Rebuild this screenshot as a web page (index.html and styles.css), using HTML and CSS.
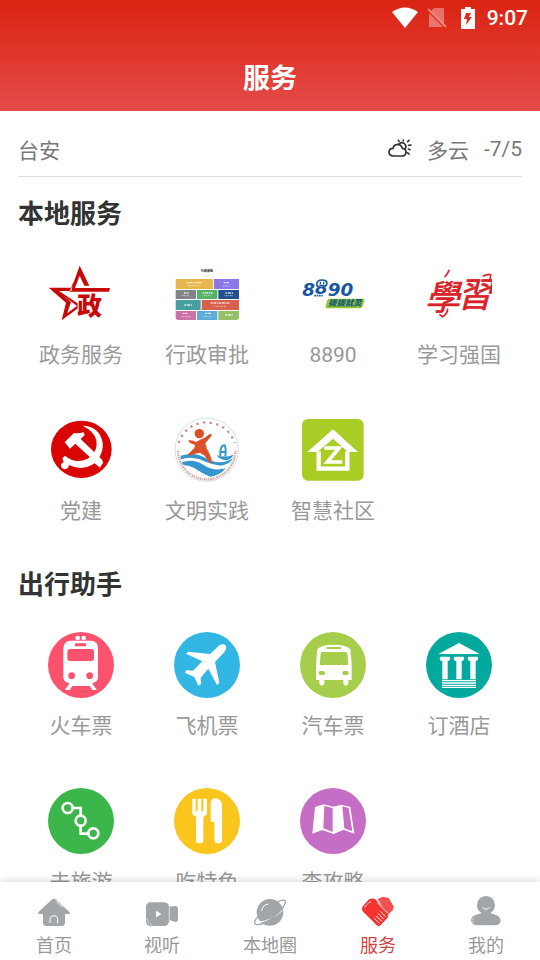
FILE: index.html
```html
<!DOCTYPE html>
<html lang="zh-CN">

<head>
    <meta charset="UTF-8">
    <meta name="viewport" content="width=device-width, initial-scale=1.0">
    <title>服务</title>
    <link rel="stylesheet" href="styles.css">
</head>

<body>
<header class="header">
    <div class="status-bar">
        <svg class="status-wifi" viewBox="0 0 26 22"><path fill="#fff" d="M0 5Q13-4 26 5L13 21Z"/></svg>
        <svg class="status-sim" viewBox="0 0 20 20"><path fill="#fff" fill-opacity=".35" d="M7 0H16Q17 0 17 1V16L4 3ZM2 5L16 19H3Q2 19 2 18Z"/><path stroke="#fff" stroke-opacity=".4" stroke-width="2" d="M1 1L19 19"/></svg>
        <svg class="status-battery" viewBox="0 0 14 22"><path fill="#fff" d="M4 0H10V2H14V22H0V2H4Z"/><path fill="#dc2b1d" d="M5 6H10L8 10H11L5 18L6 12H3Z"/></svg>
        <span class="time">9:07</span>
    </div>
    <h1 class="title">服务</h1>
</header>

<main class="content">
    <div class="weather">
        <span class="city">台安</span>
        <svg class="weather-icon" viewBox="51 21 72 72" fill="none" stroke="#333" stroke-width="5" stroke-linecap="round">
            <path d="M67 78Q54 77 54 66Q55 55 66 55Q68 44 80 43Q91 44 94 55Q105 56 105 67Q104 78 92 78Z"/>
            <path d="M84 42Q90 35 99 40Q109 48 102 57M97 30V32M84 34L82 31M110 35L114 31M113 46L120 45M112 57L117 59M109 68L114 72"/>
        </svg>
        <span>多云</span>
        <span class="temp">-7/5</span>
    </div>

    <section class="section">
        <h2 class="section-title">本地服务</h2>
        <div class="grid">
            <a class="item" href="#">
                <svg class="icon" viewBox="24 3 198 198">
                    <path fill="#c90808" fill-rule="evenodd" d="M119 17L148 77H133L119 47L105 84H210L207 95H89L101 62L94 93H57L124 137L65 181L78 128L26 83H95ZM68 105L93 126L82 159L111 138Z"/>
                    <text class="star-text" x="112" y="164">政</text>
                </svg>
                <span class="label">政务服务</span>
            </a>
            <a class="item" href="#">
                <svg class="icon" viewBox="402 3 198 198">
                    <text class="tiny-text" x="501" y="35">行政审批</text>
                    <path stroke="#ddd" stroke-width="2" d="M490 47H515"/>
                    <path fill="#e8b64f" d="M407 57H519V87H407Z"/>
                    <path fill="#8b77e8" d="M522 57H597V87H522Z"/>
                    <path fill="#828487" d="M407 90H468V117H407Z"/>
                    <path fill="#55b264" d="M471 90H532V117H471Z"/>
                    <path fill="#22508d" d="M535 90H597V117H535Z"/>
                    <path fill="#479fa2" d="M407 120H482V150H407Z"/>
                    <path fill="#d9604a" d="M485 120H597V150H485Z"/>
                    <path fill="#ca72aa" d="M407 153H468V180H415Q407 180 407 172Z"/>
                    <path fill="#5dabd8" d="M471 153H532V180H471Z"/>
                    <path fill="#94c165" d="M535 153H597V172Q597 180 589 180H535Z"/>
                    <path stroke="#fff" stroke-opacity=".75" stroke-width="4" stroke-dasharray="6 2 9 2 4 2" d="M440 68H486M551 68H567M432 99H446M487 99H518M556 99H579M433 135H458M512 129H569M428 160H442M496 160H513M555 165H578"/>
                    <path stroke="#fff" stroke-opacity=".55" stroke-width="3" stroke-dasharray="3 2 5 2" d="M444 77H481M549 78H569M425 107H448M487 107H515M553 107H579M523 139H558M423 170H453M490 170H515"/>
                </svg>
                <span class="label">行政审批</span>
            </a>
            <a class="item" href="#">
                <svg class="icon" viewBox="30 3 198 198">
                    <text class="hotline-text" x="37" y="109">8<tspan dy="-7">8</tspan><tspan dy="7">90</tspan></text>
                    <path fill="#fff" stroke="#1757a0" stroke-width="5" d="M80 74Q80 60 96 60Q113 60 110 72Q107 82 95 82Q81 82 80 74Z"/>
                    <path stroke="#1757a0" stroke-width="4" d="M91 65V73M101 65V73M88 76H103"/>
                    <path stroke="#1757a0" stroke-width="5" stroke-dasharray="5 2" d="M73 107H98"/>
                    <path fill="#91c930" d="M119 116H218Q225 117 223 124L218 138Q216 145 208 145H112Q105 144 107 137L111 123Q113 116 119 116Z"/>
                    <text class="slogan-text" x="115" y="139">拨拨就灵</text>
                </svg>
                <span class="label">8890</span>
            </a>
            <a class="item" href="#">
                <svg class="icon" viewBox="408 3 198 198">
                    <text class="study-text" x="405" y="149">學</text>
                    <text class="study-text" x="502" y="140">習</text>
                    <path fill="none" stroke="#d92328" stroke-width="5" stroke-linecap="round" d="M477 31Q472 43 465 50M473 148Q471 164 457 170L450 164M580 48Q594 41 602 44Q602 54 598 64"/>
                </svg>
                <span class="label">学习强国</span>
            </a>
            <a class="item" href="#">
                <svg class="icon" viewBox="24 21 198 198">
                    <ellipse cx="124" cy="118" rx="91" ry="86" fill="#d90404"/>
                    <path fill="#fff" d="M128 47Q178 48 188 98Q190 124 177 143L190 157L180 173L164 160Q127 185 87 165Q85 178 73 178Q61 175 63 163Q66 158 71 157L67 145L75 137Q105 162 141 147L153 139Q174 119 169 91Q164 65 128 47Z"/>
                    <path fill="#fff" d="M74 97L102 69Q114 71 131 67L134 75L122 87L188 151L176 166L106 101L90 116Z"/>
                </svg>
                <span class="label">党建</span>
            </a>
            <a class="item" href="#">
                <svg class="icon" viewBox="402 21 198 198">
                    <circle cx="500" cy="119" r="95" fill="#fff" stroke="#b8d2df" stroke-width="2"/>
                    <path fill="none" stroke="#cc8e82" stroke-width="7" stroke-dasharray="7 13" d="M416 99A88 88 0 0 1 584 99"/>
                    <path fill="none" stroke="#d7a7a2" stroke-width="7" stroke-dasharray="4 2 3 3 5 2" d="M414 122A86 86 0 0 0 586 122"/>
                    <path fill="#3498cf" d="M422 137Q464 124 498 145Q540 169 579 145Q568 165 542 167Q503 161 479 148Q449 139 422 148Z"/>
                    <path fill="#3498cf" d="M425 157Q459 144 490 164Q519 185 557 175Q540 197 510 200Q480 187 463 174Q443 164 431 166Z"/>
                    <path fill="#3498cf" d="M530 135Q555 145 580 134Q575 148 558 151Q540 150 530 135Z"/>
                    <path fill="none" stroke="#3498cf" stroke-width="6" d="M541 138Q539 105 554 106Q559 117 556 139M541 126H557"/>
                    <circle cx="478" cy="71" r="14" fill="#db5028"/>
                    <path fill="#db5028" d="M446 91Q458 89 468 96Q484 87 493 84L510 71Q516 70 515 77L496 100L501 117Q514 137 517 162Q505 156 494 137L480 128Q467 130 449 137L443 134L463 114L465 104Q455 102 446 96Z"/>
                </svg>
                <span class="label">文明实践</span>
            </a>
            <a class="item" href="#">
                <svg class="icon" viewBox="30 21 198 198">
                    <rect x="36" y="27" width="185" height="185" rx="18" fill="#a9cd25"/>
                    <path fill="#fff" d="M129 58L204 126H174L129 86L82 126H52Z"/>
                    <path fill="none" stroke="#fff" stroke-width="13" d="M86 124V176H172V124"/>
                    <path fill="none" stroke="#fff" stroke-width="11" d="M103 114H147L112 156H157"/>
                    <path stroke="#d5dbd0" stroke-width="2" stroke-dasharray="4 7" d="M78 217H172"/>
                </svg>
                <span class="label">智慧社区</span>
            </a>
        </div>
    </section>

    <section class="section">
        <h2 class="section-title">出行助手</h2>
        <div class="grid">
            <a class="item" href="#">
                <svg class="icon" viewBox="24 36 198 198">
                    <circle cx="123" cy="135" r="99" fill="#fd526e"/>
                    <path fill="#fff" d="M90 62H154Q174 65 174 84V172Q173 187 156 190L171 210H157L149 198H97L89 210H74L89 190Q71 187 70 172V84Q71 65 90 62Z"/>
                    <circle cx="113" cy="54" r="7" fill="#fff"/>
                    <circle cx="131" cy="54" r="7" fill="#fff"/>
                    <path fill="#fd526e" d="M105 70H138V79H105ZM90 87H154Q162 87 162 95V115Q162 123 154 123H90Q82 123 82 115V95Q82 87 90 87Z"/>
                    <circle cx="95" cy="167" r="10" fill="#fd526e"/>
                    <circle cx="149" cy="167" r="10" fill="#fd526e"/>
                </svg>
                <span class="label">火车票</span>
            </a>
            <a class="item" href="#">
                <svg class="icon" viewBox="402 36 198 198">
                    <circle cx="501" cy="135" r="99" fill="#32b7e5"/>
                    <path fill="#fff" d="M438 101L445 95L510 102L538 76Q549 69 557 76Q561 83 554 95L525 126L538 188L531 195L505 146L482 173L483 192L475 197L463 171L434 158L440 150L459 152L487 124Z"/>
                </svg>
                <span class="label">飞机票</span>
            </a>
            <a class="item" href="#">
                <svg class="icon" viewBox="30 36 198 198">
                    <circle cx="129" cy="135" r="99" fill="#a7cd4c"/>
                    <path fill="#fff" d="M82 88Q91 74 131 74Q171 74 181 88L185 132V180H175V190Q174 197 167 197Q160 196 160 190V180H103V190Q102 197 95 197Q88 196 88 190V180H78V132Z"/>
                    <path fill="#a7cd4c" d="M110 81H153V87H110ZM96 96H168Q171 96 172 101L175 135H89L92 101Q93 96 96 96Z"/>
                    <rect x="86" y="153" width="19" height="12" rx="5" fill="#a7cd4c"/>
                    <rect x="157" y="153" width="19" height="12" rx="5" fill="#a7cd4c"/>
                </svg>
                <span class="label">汽车票</span>
            </a>
            <a class="item" href="#">
                <svg class="icon" viewBox="408 36 198 198">
                    <circle cx="507" cy="135" r="99" fill="#02a99c"/>
                    <path fill="#fff" d="M445 102L507 69L569 102Z"/>
                    <path fill="#fff" d="M451 110H479Q484 117 475 123L473 124V178H457V124Q445 120 451 110ZM493 110H521Q526 117 517 123L515 124V178H499V124Q487 120 493 110ZM535 110H563Q568 117 559 123L557 124V178H541V124Q529 120 535 110Z"/>
                    <path stroke="#fff" stroke-width="4" d="M456 182H558M456 189H558M456 196H558M456 202H558"/>
                </svg>
                <span class="label">订酒店</span>
            </a>
            <a class="item" href="#">
                <svg class="icon" viewBox="24 24 198 198">
                    <circle cx="123" cy="123" r="99" fill="#3cb54a"/>
                    <g fill="none" stroke="#fff" stroke-width="8">
                        <circle cx="83" cy="84" r="15"/>
                        <circle cx="122" cy="122" r="15"/>
                        <circle cx="160" cy="160" r="15"/>
                        <path d="M98 84H122V107M122 137V161H145"/>
                    </g>
                </svg>
                <span class="label">去旅游</span>
            </a>
            <a class="item" href="#">
                <svg class="icon" viewBox="402 24 198 198">
                    <circle cx="501" cy="123" r="99" fill="#fac51d"/>
                    <path fill="#fff" d="M457 56H467V94H473V56H484V94H490V56H501V99Q500 107 490 110V182Q489 190 479 190Q469 190 468 182V110Q458 107 457 99ZM512 66Q514 56 527 55Q543 57 546 74V182Q545 190 535 190Q525 190 523 182V126H512Z"/>
                </svg>
                <span class="label">吃特色</span>
            </a>
            <a class="item" href="#">
                <svg class="icon" viewBox="30 24 198 198">
                    <circle cx="129" cy="123" r="99" fill="#c66dc5"/>
                    <path fill="#fff" d="M75 81L101 73L130 80L155 74L181 81L193 161L161 149L131 162L97 150L67 161Z"/>
                    <path fill="#c66dc5" d="M103 78L128 84V156L100 145ZM157 79L176 84L187 154L163 145Z"/>
                </svg>
                <span class="label">查攻略</span>
            </a>
        </div>
    </section>
</main>

<nav class="tabbar">
    <a class="tab" href="#">
        <svg class="tab-icon" viewBox="108 54 108 108">
            <path fill="#a2a6a9" d="M155 71Q162 66 169 71L208 108Q213 114 206 114H195V140Q194 150 184 150H140Q130 150 129 140V114H118Q111 113 116 107Z"/>
            <path fill="none" stroke="#fff" stroke-width="3" d="M150 141V128Q151 119 162 119Q172 119 173 128V141M168 74L187 93"/>
        </svg>
        <span class="tab-label">首页</span>
    </a>
    <a class="tab" href="#">
        <svg class="tab-icon" viewBox="432 54 108 108">
            <path fill="#a2a6a9" d="M451 79H493Q505 80 507 92L526 90Q534 91 534 99V131Q533 139 526 138L508 132Q507 149 494 150H451Q439 149 438 137V91Q440 80 451 79Z"/>
            <path fill="#fff" d="M468 104L484 114L468 124Z"/>
            <path fill="none" stroke="#fff" stroke-width="2" stroke-dasharray="8 3" d="M442 127Q442 145 456 146"/>
            <path stroke="#fff" stroke-width="2" d="M508 94V131"/>
        </svg>
        <span class="tab-label">视听</span>
    </a>
    <a class="tab" href="#">
        <svg class="tab-icon" viewBox="756 54 108 108">
            <circle cx="810" cy="109" r="40" fill="#a2a6a9"/>
            <path fill="none" stroke="#fff" stroke-width="3" d="M848 103Q812 136 774 139M785 104Q787 87 805 84"/>
            <path fill="none" stroke="#a2a6a9" stroke-width="4" d="M833 77Q858 66 856 80Q852 97 820 124Q782 151 767 145Q758 140 774 121"/>
        </svg>
        <span class="tab-label">本地圈</span>
    </a>
    <a class="tab active" href="#">
        <svg class="tab-icon" viewBox="180 54 108 108">
            <path fill="#f45050" d="M233 69L248 62L266 66L282 93L278 103L263 117Z"/>
            <path fill="#f83332" d="M188 91L208 69Q218 65 226 70L266 110L263 125L240 149Q233 153 227 145L188 106Q183 99 188 91Z"/>
            <path fill="none" stroke="#fff" stroke-width="3" d="M232 80L265 113M241 106L257 122M235 113L251 129M229 120L245 136M223 127L238 142"/>
            <path fill="none" stroke="#fff" stroke-width="3" stroke-dasharray="8 2" d="M194 94Q201 82 213 77"/>
        </svg>
        <span class="tab-label">服务</span>
    </a>
    <a class="tab" href="#">
        <svg class="tab-icon" viewBox="504 54 108 108">
            <path fill="#a2a6a9" d="M513 133Q514 120 529 116L545 111Q531 104 531 87Q533 62 558 60Q583 62 585 87Q585 103 571 111L588 117Q602 122 602 135Q600 148 583 148H533Q514 148 513 133Z"/>
            <path fill="none" stroke="#fff" stroke-width="3" stroke-linecap="round" d="M548 95Q558 105 568 95"/>
            <path fill="none" stroke="#fff" stroke-width="2" stroke-dasharray="8 3" d="M523 125Q514 133 521 143"/>
        </svg>
        <span class="tab-label">我的</span>
    </a>
</nav>
</body>

</html>
```
FILE: styles.css
```css
* {
    box-sizing: border-box;
}

body {
    margin: 0;
    height: 100vh;
    display: flex;
    flex-direction: column;
    font-family: Roboto, "Noto Sans CJK SC", sans-serif;
    background: #fff;
    color: #333;
}

a {
    color: inherit;
    text-decoration: none;
}

svg {
    display: block;
    flex-shrink: 0;
}

/* header */
.header {
    flex-shrink: 0;
    background: linear-gradient(180deg, #db2311 0%, #e44b49 100%);
    color: #fff;
}

.status-bar {
    display: flex;
    align-items: center;
    justify-content: flex-end;
    height: 36px;
    padding: 0 12px;
}

.status-wifi {
    width: 26px;
    height: 22px;
    margin-right: 9px;
}

.status-sim {
    width: 20px;
    height: 20px;
    margin-right: 14px;
}

.status-battery {
    width: 14px;
    height: 22px;
    margin-right: 12px;
}

.time {
    font-size: 21px;
    font-weight: 500;
}

.title {
    margin: 0;
    padding: 11px 0 0;
    font-size: 27px;
    font-weight: 700;
    line-height: 64px;
    text-align: center;
}

/* page content */
.content {
    flex: 1;
    min-height: 0;
    overflow-y: auto;
    scrollbar-width: none;
}

.weather {
    display: flex;
    align-items: center;
    height: 66px;
    margin: 0 18px;
    padding-top: 10px;
    border-bottom: 1px solid #ddd;
    font-size: 21px;
    color: #777;
}

.city {
    flex: 1;
}

.weather-icon {
    width: 24px;
    height: 24px;
    margin-right: 15px;
}

.temp {
    margin-left: 15px;
}

.section {
    padding: 0 18px 23px;
}

.section-title {
    margin: 0;
    font-size: 26px;
    font-weight: 700;
    line-height: 74px;
}

.grid {
    display: grid;
    grid-template-columns: repeat(4, 1fr);
    row-gap: 48px;
    padding-top: 10px;
}

.item {
    display: flex;
    flex-direction: column;
    align-items: center;
}

.icon {
    width: 66px;
    height: 66px;
}

.label {
    margin-top: 14px;
    font-size: 21px;
    line-height: 28px;
    color: #999;
}

/* lettering inside the logos */
.star-text {
    font-size: 74px;
    font-weight: 900;
    fill: #c90808;
    stroke: #fff;
    stroke-width: 6px;
    paint-order: stroke;
}

.tiny-text {
    font-size: 9px;
    font-weight: 700;
    text-anchor: middle;
}

.hotline-text {
    font-family: "DejaVu Sans", sans-serif;
    font-size: 55px;
    font-weight: 700;
    font-style: italic;
    fill: #1757a0;
}

.slogan-text {
    font-size: 25px;
    font-weight: 900;
    font-style: italic;
    fill: #1b5d78;
}

.study-text {
    font-family: "Noto Sans CJK TC", sans-serif;
    font-size: 104px;
    font-weight: 400;
    font-style: italic;
    fill: #d92328;
    stroke: #d92328;
    stroke-width: 2px;
}

/* bottom tabs */
.tabbar {
    position: relative;
    display: flex;
    flex-shrink: 0;
    padding: 12px 0 2px;
    background: #fff;
    box-shadow: 0 -1px 8px rgba(0, 0, 0, 0.16);
}

.tab {
    flex: 1;
    display: flex;
    flex-direction: column;
    align-items: center;
    color: #999;
}

.tab.active {
    color: #d04444;
}

.tab-icon {
    width: 36px;
    height: 36px;
}

.tab-label {
    margin-top: 4px;
    font-size: 18px;
    line-height: 24px;
}
```
